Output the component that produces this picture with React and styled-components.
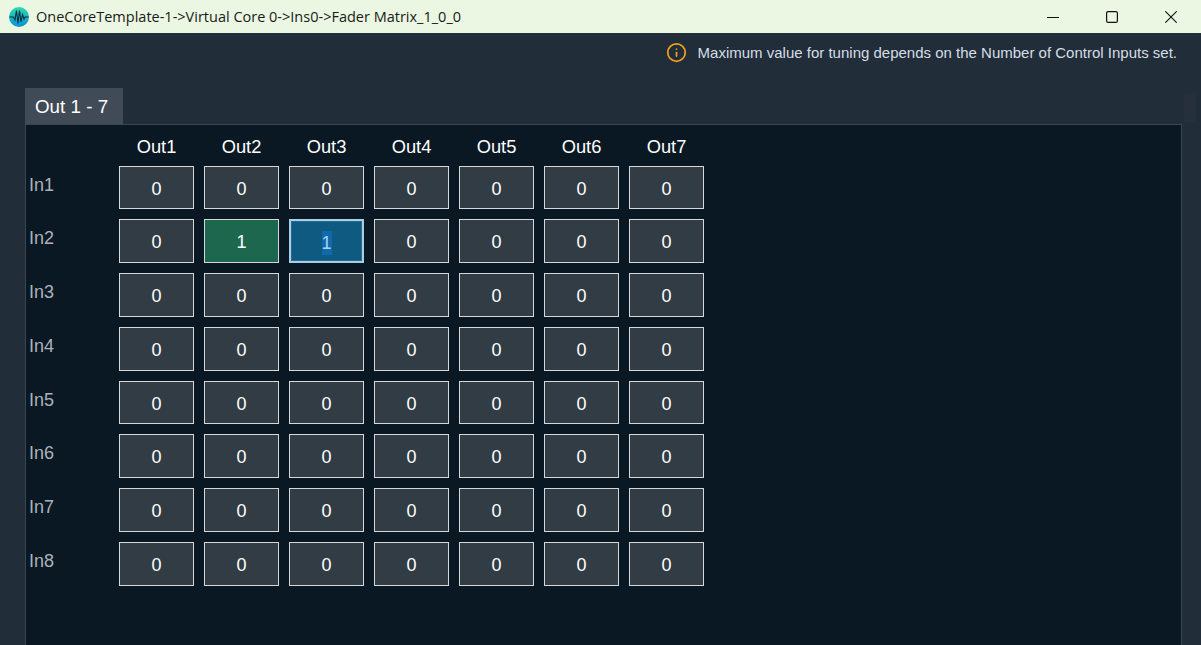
import React from "react";
import styled, { createGlobalStyle } from "styled-components";
import { Info } from "lucide-react";

const GlobalStyle = createGlobalStyle`
  html, body {
    margin: 0;
    padding: 0;
    height: 100%;
    overflow: hidden;
    background-color: #222d3a;
    font-family: "Liberation Sans", Arial, sans-serif;
  }
`;

const Window = styled.div`
  position: relative;
  display: flex;
  flex-direction: column;
  width: 1201px;
  height: 645px;
  overflow: hidden;
  background-color: #222d3a;
`;

const TitleBar = styled.header`
  display: flex;
  align-items: center;
  flex: none;
  height: 33px;
  padding-left: 9px;
  background-color: #ebf7e2;
`;

const Title = styled.span`
  margin-left: 7px;
  font-family: "Open Sans", sans-serif;
  font-size: 14.5px;
  color: #1a1a1a;
  white-space: nowrap;
`;

const WindowButtons = styled.div`
  display: flex;
  margin-left: auto;
  margin-right: 1px;
`;

const WindowButton = styled.span`
  display: flex;
  align-items: center;
  justify-content: center;
  width: 59px;
  height: 29px;
`;

const Notice = styled.div`
  display: flex;
  align-items: center;
  justify-content: flex-end;
  flex: none;
  height: 40px;
  padding: 0 24px 2px 0;
  box-sizing: border-box;
  font-size: 15px;
  color: #d5dde5;
`;

const NoticeIcon = styled(Info)`
  margin: 1px 11px 0 0;
  color: #f0a020;
`;

const ScrollThumb = styled.div`
  position: absolute;
  top: 93px;
  right: 5px;
  width: 12px;
  height: 29px;
  border-radius: 3px;
  background-color: #262f3c;
`;

const Tab = styled.div`
  display: flex;
  align-items: center;
  flex: none;
  align-self: flex-start;
  width: 98px;
  height: 36px;
  margin: 15px 0 0 25px;
  padding: 2px 0 0 10px;
  box-sizing: border-box;
  background-color: #414b57;
  font-size: 18.8px;
  color: #fff;
`;

const Panel = styled.main`
  flex: 1;
  width: 1157px;
  margin-left: 25px;
  padding: 10px 0 0 3px;
  box-sizing: border-box;
  background-color: #0a1824;
  border: 1px solid #3a4552;
  border-bottom: none;
`;

const HeaderRow = styled.div`
  display: grid;
  grid-template-columns: 80px repeat(7, 75px);
  column-gap: 10px;
  height: 30.7px;
`;

const Matrix = styled.div`
  display: grid;
  grid-template-columns: 80px repeat(7, 75px);
  grid-auto-rows: 43.8px;
  column-gap: 10px;
  row-gap: 9.95px;
`;

const OutLabel = styled.span`
  font-size: 18.3px;
  line-height: 24px;
  color: #fff;
  text-align: center;
`;

const InLabel = styled.span`
  font-size: 18px;
  line-height: 38px;
  color: #aab2ba;
`;

const Cell = styled.div`
  display: flex;
  align-items: center;
  justify-content: center;
  padding-top: 3px;
  box-sizing: border-box;
  font-size: 18px;
  color: #fff;
  background-color: ${(p) =>
    p.$variant === "on" ? "#1d674f" : p.$variant === "active" ? "#0f5a80" : "#313c44"};
  border: 1px solid #d4d8da;
  ${(p) =>
    p.$variant === "active" &&
    `
    border: 2px solid #a9cfe6;
    box-shadow: inset 0 0 0 1px #2b6a90;
  `}
`;

const Selected = styled.span`
  display: inline-block;
  width: 10px;
  height: 24px;
  line-height: 24px;
  text-align: center;
  background-color: #0f69ad;
  color: #a9d4f2;
`;

const LogoMark = () => (
  <svg width="20" height="20" viewBox="0 0 20 20">
    <defs>
      <linearGradient id="logoFill" x1="0" y1="0" x2="0" y2="1">
        <stop offset="0" stopColor="#2fdcae" />
        <stop offset="1" stopColor="#0a8fd8" />
      </linearGradient>
    </defs>
    <circle cx="10" cy="10" r="10" fill="url(#logoFill)" />
    <path
      d="M0.5 10H4.5L6 13 7.5 3.5 9 16.5 10.5 3.5 12 15 13.5 7.5 15 12 16 10H19.5"
      fill="none"
      stroke="#06303f"
      strokeWidth="1.1"
    />
  </svg>
);

const MinimizeIcon = () => (
  <svg width="12" height="12" viewBox="0 0 12 12">
    <path d="M0 6.5H12" stroke="#111" strokeWidth="1" fill="none" />
  </svg>
);

const MaximizeIcon = () => (
  <svg width="12" height="12" viewBox="0 0 12 12">
    <rect x="0.6" y="0.6" width="10.8" height="10.8" rx="1.5" stroke="#111" strokeWidth="1.2" fill="none" />
  </svg>
);

const CloseIcon = () => (
  <svg width="12" height="12" viewBox="0 0 12 12">
    <path d="M0.3 0.3L11.7 11.7M11.7 0.3L0.3 11.7" stroke="#111" strokeWidth="1.1" fill="none" />
  </svg>
);

const outs = [1, 2, 3, 4, 5, 6, 7];
const ins = [1, 2, 3, 4, 5, 6, 7, 8];

export default function App() {
  return (
    <Window>
      <GlobalStyle />
      <TitleBar>
        <LogoMark />
        <Title>OneCoreTemplate-1-&gt;Virtual Core 0-&gt;Ins0-&gt;Fader Matrix_1_0_0</Title>
        <WindowButtons>
          <WindowButton>
            <MinimizeIcon />
          </WindowButton>
          <WindowButton>
            <MaximizeIcon />
          </WindowButton>
          <WindowButton>
            <CloseIcon />
          </WindowButton>
        </WindowButtons>
      </TitleBar>
      <Notice>
        <NoticeIcon size={21} strokeWidth={2} />
        Maximum value for tuning depends on the Number of Control Inputs set.
      </Notice>
      <ScrollThumb />
      <Tab>Out 1 - 7</Tab>
      <Panel>
        <HeaderRow>
          <span />
          {outs.map((o) => (
            <OutLabel key={o}>Out{o}</OutLabel>
          ))}
        </HeaderRow>
        <Matrix>
          {ins.map((i) => (
            <React.Fragment key={i}>
              <InLabel>In{i}</InLabel>
              {outs.map((o) => {
                if (i === 2 && o === 2) return <Cell key={o} $variant="on">1</Cell>;
                if (i === 2 && o === 3)
                  return (
                    <Cell key={o} $variant="active">
                      <Selected>1</Selected>
                    </Cell>
                  );
                return <Cell key={o}>0</Cell>;
              })}
            </React.Fragment>
          ))}
        </Matrix>
      </Panel>
    </Window>
  );
}
